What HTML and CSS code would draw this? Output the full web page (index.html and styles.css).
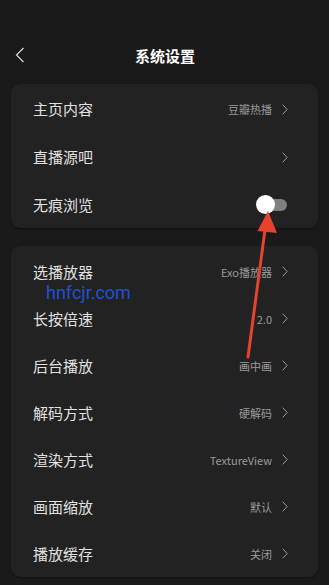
FILE: index.html
```html
<!DOCTYPE html>
<html lang="zh">
<head>
<meta charset="utf-8">
<title>系统设置</title>
<link rel="stylesheet" href="styles.css">
</head>
<body>
<div class="screen">
  <header class="header">
    <svg class="back" width="10" height="16" viewBox="0 0 10 16"><path d="M8.5 1 L1.5 8 L8.5 15" fill="none" stroke="#d8d8d8" stroke-width="1.2"/></svg>
    <div class="title">系统设置</div>
  </header>

  <section class="card card-a">
    <div class="row"><span class="label">主页内容</span><span class="right"><span class="value">豆瓣热播</span><svg class="chev" width="6" height="11" viewBox="0 0 6 11"><path d="M0.7 0.7 L5.2 5.5 L0.7 10.3" fill="none" stroke="#9a9a9a" stroke-width="1"/></svg></span></div>
    <div class="row"><span class="label">直播源吧</span><span class="right"><svg class="chev" width="6" height="11" viewBox="0 0 6 11"><path d="M0.7 0.7 L5.2 5.5 L0.7 10.3" fill="none" stroke="#9a9a9a" stroke-width="1"/></svg></span></div>
    <div class="row"><span class="label">无痕浏览</span><span class="toggle"><span class="knob"></span></span></div>
  </section>

  <section class="card card-b">
    <div class="row"><span class="label">选播放器</span><span class="right"><span class="value">Exo播放器</span><svg class="chev" width="6" height="11" viewBox="0 0 6 11"><path d="M0.7 0.7 L5.2 5.5 L0.7 10.3" fill="none" stroke="#9a9a9a" stroke-width="1"/></svg></span></div>
    <div class="row"><span class="label">长按倍速</span><span class="right"><span class="value">2.0</span><svg class="chev" width="6" height="11" viewBox="0 0 6 11"><path d="M0.7 0.7 L5.2 5.5 L0.7 10.3" fill="none" stroke="#9a9a9a" stroke-width="1"/></svg></span></div>
    <div class="row"><span class="label">后台播放</span><span class="right"><span class="value">画中画</span><svg class="chev" width="6" height="11" viewBox="0 0 6 11"><path d="M0.7 0.7 L5.2 5.5 L0.7 10.3" fill="none" stroke="#9a9a9a" stroke-width="1"/></svg></span></div>
    <div class="row"><span class="label">解码方式</span><span class="right"><span class="value">硬解码</span><svg class="chev" width="6" height="11" viewBox="0 0 6 11"><path d="M0.7 0.7 L5.2 5.5 L0.7 10.3" fill="none" stroke="#9a9a9a" stroke-width="1"/></svg></span></div>
    <div class="row"><span class="label">渲染方式</span><span class="right"><span class="value">TextureView</span><svg class="chev" width="6" height="11" viewBox="0 0 6 11"><path d="M0.7 0.7 L5.2 5.5 L0.7 10.3" fill="none" stroke="#9a9a9a" stroke-width="1"/></svg></span></div>
    <div class="row"><span class="label">画面缩放</span><span class="right"><span class="value">默认</span><svg class="chev" width="6" height="11" viewBox="0 0 6 11"><path d="M0.7 0.7 L5.2 5.5 L0.7 10.3" fill="none" stroke="#9a9a9a" stroke-width="1"/></svg></span></div>
    <div class="row"><span class="label">播放缓存</span><span class="right"><span class="value">关闭</span><svg class="chev" width="6" height="11" viewBox="0 0 6 11"><path d="M0.7 0.7 L5.2 5.5 L0.7 10.3" fill="none" stroke="#9a9a9a" stroke-width="1"/></svg></span></div>
  </section>

  <div class="watermark">hnfcjr.com</div>

  <svg class="arrow" width="329" height="585" viewBox="0 0 329 585">
    <line x1="248" y1="357" x2="265.5" y2="226" stroke="#e5432b" stroke-width="3" stroke-linecap="round"/>
    <polygon points="268,211 257.5,231 277,233" fill="#e5432b"/>
  </svg>
</div>
</body>
</html>
```

FILE: styles.css
```css
html, body {
  margin: 0;
  padding: 0;
  background: #1a1a1a;
}
body {
  font-family: "Noto Sans CJK SC", "Noto Sans", sans-serif;
  color: #e2e2e2;
}
.screen {
  position: relative;
  width: 329px;
  height: 585px;
  overflow: hidden;
  background: #1a1a1a;
}
.header {
  position: relative;
  height: 44px;
  margin-top: 33px;
  display: flex;
  align-items: center;
  justify-content: center;
}
.back {
  position: absolute;
  left: 15px;
  top: 14px;
}
.title {
  font-size: 15px;
  font-weight: 700;
  color: #ffffff;
  margin-left: 1px;
}
.card {
  margin: 0 11px;
  background: #222222;
  border-radius: 9px;
  box-shadow: 0 1px 2px rgba(0,0,0,0.35);
}
.card-a {
  margin-top: 7px;
}
.card-a .row {
  height: 48px;
}
.card-b {
  margin-top: 18px;
  padding: 1px 0;
}
.card-b .row {
  height: 47px;
}
.row {
  box-sizing: border-box;
  display: flex;
  align-items: center;
  justify-content: space-between;
  padding: 2px 30px 0 22px;
}
.label {
  font-size: 15px;
  color: #e0e0e0;
  line-height: 20px;
}
.right {
  display: flex;
  align-items: center;
  gap: 10px;
}
.value {
  font-size: 11px;
  color: #9a9a9a;
  line-height: 14px;
}
.chev {
  display: block;
}
.toggle {
  position: relative;
  width: 30px;
  height: 12px;
  border-radius: 6px;
  background: #7f7f7f;
  margin-right: 1px;
}
.knob {
  position: absolute;
  left: -1px;
  top: -4px;
  width: 19px;
  height: 19px;
  border-radius: 50%;
  background: #ffffff;
}
.watermark {
  position: absolute;
  left: 46px;
  top: 282px;
  font-family: Roboto, "Noto Sans", sans-serif;
  font-size: 18px;
  color: #1f50d2;
  line-height: 22px;
}
.arrow {
  position: absolute;
  left: 0;
  top: 0;
  pointer-events: none;
}
```
